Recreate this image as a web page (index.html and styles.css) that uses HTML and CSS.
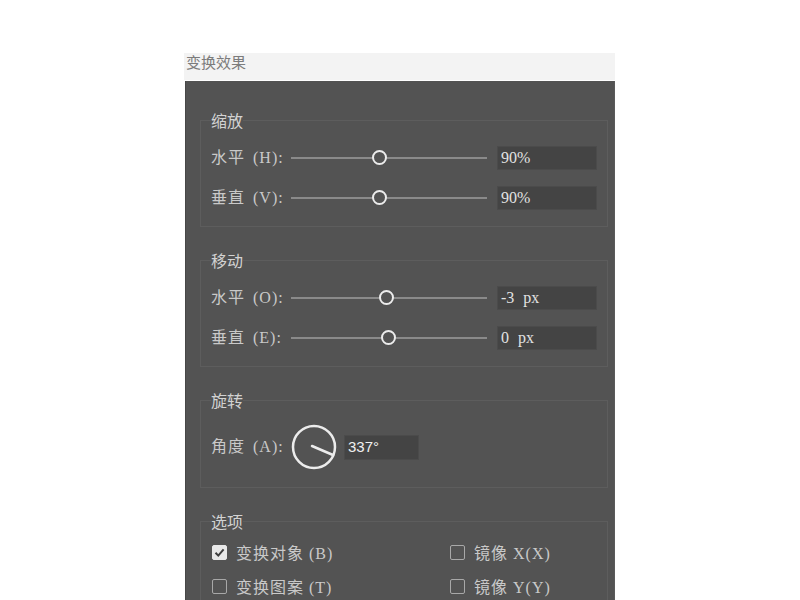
FILE: index.html
```html
<!DOCTYPE html>
<html lang="zh-CN">
<head>
<meta charset="utf-8">
<title>变换效果</title>
<link rel="stylesheet" href="styles.css">
</head>
<body>
<div class="dialog">
  <div class="titlebar">变换效果</div>
  <div class="panel">
    <fieldset class="group">
      <legend>缩放</legend>
      <div class="rows">
        <div class="row">
          <div class="label">水平 (H):</div>
          <div class="track"><span class="thumb" style="left:45.4%"></span></div>
          <div class="field">90%</div>
        </div>
        <div class="row">
          <div class="label">垂直 (V):</div>
          <div class="track"><span class="thumb" style="left:45.4%"></span></div>
          <div class="field">90%</div>
        </div>
      </div>
    </fieldset>

    <fieldset class="group">
      <legend>移动</legend>
      <div class="rows">
        <div class="row">
          <div class="label">水平 (O):</div>
          <div class="track"><span class="thumb" style="left:49%"></span></div>
          <div class="field">-3 px</div>
        </div>
        <div class="row">
          <div class="label">垂直 (E):</div>
          <div class="track"><span class="thumb" style="left:50%"></span></div>
          <div class="field">0 px</div>
        </div>
      </div>
    </fieldset>

    <fieldset class="group rot">
      <legend>旋转</legend>
      <div class="rotate">
        <div class="label">角度 (A):</div>
        <svg class="dial" width="46" height="46" viewBox="0 0 46 46">
          <circle cx="23" cy="23" r="21" fill="none" stroke="#ececec" stroke-width="2.5"/>
          <line x1="21" y1="22" x2="42" y2="31" stroke="#ececec" stroke-width="2.5" stroke-linecap="round"/>
        </svg>
        <div class="field angle">337°</div>
      </div>
    </fieldset>

    <fieldset class="group last">
      <legend>选项</legend>
      <div class="options">
        <div class="opt"><span class="box checked"><svg width="11" height="11" viewBox="0 0 11 11"><path d="M1.5 5.8 L4.3 8.6 L9.6 2.4" fill="none" stroke="#3e3e3e" stroke-width="2"/></svg></span>变换对象 (B)</div>
        <div class="opt"><span class="box"></span>镜像 X(X)</div>
        <div class="opt"><span class="box"></span>变换图案 (T)</div>
        <div class="opt"><span class="box"></span>镜像 Y(Y)</div>
      </div>
    </fieldset>
  </div>
</div>
</body>
</html>
```

FILE: styles.css
```css
html, body {
  margin: 0;
  padding: 0;
  background: #ffffff;
}

body {
  font-family: "Liberation Serif", "Noto Sans CJK SC", serif;
  overflow: hidden;
  height: 600px;
}

.dialog {
  margin: 53px 0 0 184px;
  width: 431px;
}

.titlebar {
  height: 27px;
  background: #f3f3f3;
  padding-left: 2px;
  font-family: "Noto Sans CJK SC", sans-serif;
  font-size: 15px;
  line-height: 17px;
  color: #7c7c7c;
}

.panel {
  box-sizing: border-box;
  margin: 1px 0 0 1px;
  width: 430px;
  height: 520px;
  background: #535353;
  border-left: 1px solid #474747;
  border-right: 1px solid #5a5a5a;
  padding: 29px 6px 0 14px;
}

.group {
  margin: 0 0 23px 0;
  border: 1px solid #5d5d5d;
  padding: 0 10px 16px 10px;
  min-width: 0;
}

.group.rot {
  padding-bottom: 17px;
}

.group legend {
  padding: 0;
  font-family: "Noto Sans CJK SC", sans-serif;
  font-size: 16px;
  line-height: 20px;
  color: #d2d2d2;
}

.rows {
  margin-top: 16px;
  display: flex;
  flex-direction: column;
  gap: 16px;
}

.row {
  display: flex;
  align-items: center;
  height: 24px;
}

.label {
  width: 80px;
  flex: none;
  font-size: 16px;
  line-height: 20px;
  letter-spacing: 1px;
  word-spacing: 3px;
  color: #c9c9c9;
  white-space: nowrap;
}

.track {
  position: relative;
  width: 196px;
  flex: none;
  height: 24px;
  margin-right: 10px;
}

.track::before {
  content: "";
  display: block;
  position: absolute;
  left: 0;
  right: 0;
  top: 11px;
  height: 2px;
  background: #8a8a8a;
}

.thumb {
  position: absolute;
  top: 4px;
  width: 11px;
  height: 11px;
  margin-left: -8px;
  border: 2.5px solid #ececec;
  border-radius: 50%;
  background: #535353;
}

.field {
  box-sizing: border-box;
  width: 100px;
  height: 24px;
  flex: none;
  background: #444444;
  border: 1px solid #4b4b4b;
  padding-left: 3px;
  font-size: 16px;
  line-height: 22px;
  word-spacing: 5px;
  color: #e2e2e2;
}

.rotate {
  margin-top: 14px;
  display: flex;
  align-items: center;
  height: 46px;
}

.dial {
  flex: none;
  display: block;
  margin-right: 7px;
}

.field.angle {
  width: 75px;
  height: 25px;
  font-family: "Liberation Sans", sans-serif;
  font-size: 15px;
  color: #f0f0f0;
}

.options {
  margin-top: 11px;
  display: grid;
  grid-template-columns: 238px 1fr;
  row-gap: 14px;
}

.opt {
  display: flex;
  align-items: center;
  height: 20px;
  font-size: 16px;
  letter-spacing: 1px;
  color: #c9c9c9;
  white-space: nowrap;
}

.box {
  box-sizing: border-box;
  width: 15px;
  height: 15px;
  margin-left: 1px;
  margin-right: 9px;
  border: 1.5px solid #a8a8a8;
  border-radius: 2px;
  display: flex;
  align-items: center;
  justify-content: center;
}

.box.checked {
  background: #e8e8e8;
  border-color: #e8e8e8;
}
```
